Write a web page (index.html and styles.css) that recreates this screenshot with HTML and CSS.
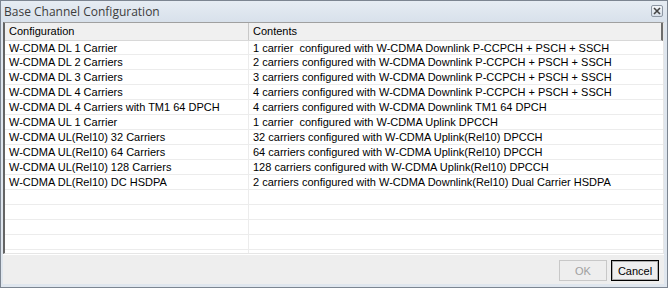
FILE: index.html
```html
<!DOCTYPE html>
<html lang="en">

<head>
	<meta charset="UTF-8">
	<title>Base Channel Configuration</title>
	<link rel="stylesheet" href="styles.css">
</head>

<body>
	<div class="window">
		<div class="titlebar">
			<span class="title">Base Channel Configuration</span>
			<button class="close-btn">
				<svg width="8" height="8" viewBox="0 0 8 8">
					<path d="M1 1 L7 7 M7 1 L1 7" stroke="#444" stroke-width="1.6"/>
				</svg>
			</button>
		</div>

		<div class="grid">
			<div class="row head">
				<div class="cell c1">Configuration</div>
				<div class="cell c2">Contents</div>
			</div>
			<div class="row">
				<div class="cell c1">W-CDMA DL 1 Carrier</div>
				<div class="cell c2">1 carrier&nbsp; configured with W-CDMA Downlink P-CCPCH + PSCH + SSCH</div>
			</div>
			<div class="row">
				<div class="cell c1">W-CDMA DL 2 Carriers</div>
				<div class="cell c2">2 carriers configured with W-CDMA Downlink P-CCPCH + PSCH + SSCH</div>
			</div>
			<div class="row">
				<div class="cell c1">W-CDMA DL 3 Carriers</div>
				<div class="cell c2">3 carriers configured with W-CDMA Downlink P-CCPCH + PSCH + SSCH</div>
			</div>
			<div class="row">
				<div class="cell c1">W-CDMA DL 4 Carriers</div>
				<div class="cell c2">4 carriers configured with W-CDMA Downlink P-CCPCH + PSCH + SSCH</div>
			</div>
			<div class="row">
				<div class="cell c1">W-CDMA DL 4 Carriers with TM1 64 DPCH</div>
				<div class="cell c2">4 carriers configured with W-CDMA Downlink TM1 64 DPCH</div>
			</div>
			<div class="row">
				<div class="cell c1">W-CDMA UL 1 Carrier</div>
				<div class="cell c2">1 carrier&nbsp; configured with W-CDMA Uplink DPCCH</div>
			</div>
			<div class="row">
				<div class="cell c1">W-CDMA UL(Rel10) 32 Carriers</div>
				<div class="cell c2">32 carriers configured with W-CDMA Uplink(Rel10) DPCCH</div>
			</div>
			<div class="row">
				<div class="cell c1">W-CDMA UL(Rel10) 64 Carriers</div>
				<div class="cell c2">64 carriers configured with W-CDMA Uplink(Rel10) DPCCH</div>
			</div>
			<div class="row">
				<div class="cell c1">W-CDMA UL(Rel10) 128 Carriers</div>
				<div class="cell c2">128 carriers configured with W-CDMA Uplink(Rel10) DPCCH</div>
			</div>
			<div class="row">
				<div class="cell c1">W-CDMA DL(Rel10) DC HSDPA</div>
				<div class="cell c2">2 carriers configured with W-CDMA Downlink(Rel10) Dual Carrier HSDPA</div>
			</div>
			<div class="row"><div class="cell c1"></div><div class="cell c2"></div></div>
			<div class="row"><div class="cell c1"></div><div class="cell c2"></div></div>
			<div class="row"><div class="cell c1"></div><div class="cell c2"></div></div>
			<div class="row"><div class="cell c1"></div><div class="cell c2"></div></div>
			<div class="row"><div class="cell c1"></div><div class="cell c2"></div></div>
		</div>

		<div class="footer">
			<button class="btn" disabled>OK</button>
			<button class="btn default">Cancel</button>
		</div>
	</div>
</body>

</html>
```

FILE: styles.css
```css
body {
	margin: 0;
	background-color: #ffffff;
	font-family: 'Liberation Sans', Arial, sans-serif;
	font-size: 11px;
}

.window {
	width: 668px;
	height: 288px;
	box-sizing: border-box;
	border: 1px solid #7c8591;
	background-color: #dfe6ee;
	display: flex;
	flex-direction: column;
	padding: 0 3px 3px 2px;
}

.titlebar {
	height: 21px;
	display: flex;
	align-items: center;
	justify-content: space-between;
	background: linear-gradient(#e6ecf3, #d8e1eb);
	margin: 0 -3px 0 -2px;
	padding: 0 4px 0 3px;
}

.title {
	font-family: 'Open Sans', sans-serif;
	font-size: 12px;
	color: #3c3c3c;
}

.close-btn {
	width: 12px;
	height: 12px;
	padding: 0;
	margin-top: -1px;
	border: 1px solid #8d97a4;
	border-radius: 2px;
	background: linear-gradient(#f3f6f9, #d6dee8);
	display: flex;
	align-items: center;
	justify-content: center;
}

.grid {
	height: 230px;
	background-color: #ffffff;
	border-left: 2px solid #646464;
	border-top: 1px solid #a0a0a0;
	border-right: 1px solid #e6e6e6;
	border-bottom: 1px solid #e6e6e6;
	overflow: hidden;
}

.row {
	display: flex;
	height: 14px;
	border-bottom: 1px solid #ececec;
	line-height: 14px;
}

.row:nth-child(2) {
	height: 13px;
}

.cell {
	padding-left: 4px;
	white-space: nowrap;
	color: #000000;
}

.c1 {
	width: 239px;
	border-right: 1px solid #ececec;
}

.c2 {
	flex: 1;
}

.head {
	height: 17px;
	line-height: 17px;
	background-color: #f0f0f0;
	border-bottom: 1px solid #d8d8d8;
	border-right: 2px solid #6d6d6d;
}

.head .c1 {
	border-right: 1px solid #c8c8c8;
}

.footer {
	flex: 1;
	background-color: #eeeeee;
	border-top: 1px solid #ffffff;
	display: flex;
	justify-content: flex-end;
	align-items: center;
	gap: 4px;
	padding: 2px 5px 0 0;
}

.btn {
	width: 48px;
	height: 21px;
	font-family: 'Liberation Sans', Arial, sans-serif;
	font-size: 11px;
	background-color: #eeeeee;
	border: 1px solid #adadad;
	padding: 0;
	color: #000000;
}

.btn:disabled {
	color: #a0a0a0;
	border-color: #c8c8c8;
}

.btn.default {
	border: 1px solid #000000;
	box-shadow: inset 0 0 0 1px #adadad;
}
```
